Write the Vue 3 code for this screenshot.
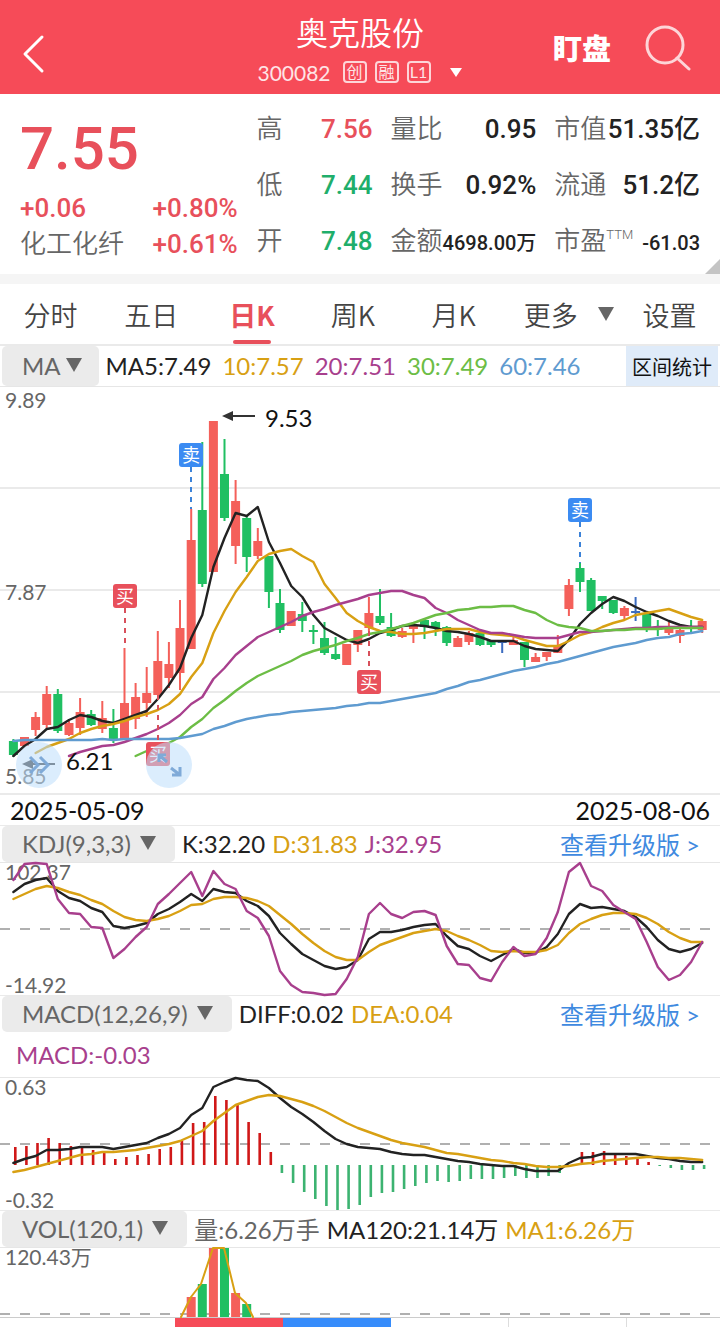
<script setup>
import { ref } from "vue";

const STEP = 11.11;
const xAt = (i) => Math.round((13.4 + i * STEP) * 10) / 10;

const toPoints = (values, start = 0) =>
  values.map((y, i) => `${xAt(i + start)},${y}`).join(" ");

const stats = [
  { label: "高", value: "7.56", tone: "up" },
  { label: "量比", value: "0.95" },
  { label: "市值", value: "51.35亿" },
  { label: "低", value: "7.44", tone: "down" },
  { label: "换手", value: "0.92%" },
  { label: "流通", value: "51.2亿" },
  { label: "开", value: "7.48", tone: "down" },
  { label: "金额", value: "4698.00万", small: true },
  { label: "市盈", sup: "TTM", value: "-61.03", small: true },
];

const tabs = ["分时", "五日", "日K", "周K", "月K"];
const activeTab = ref("日K");

// [colour, body top, body bottom, wick top, wick bottom]
const candles = [
  ["g", 741, 755, 739, 757], ["r", 737, 746, 737, 747], ["r", 717, 730, 712, 736],
  ["r", 694, 725, 686, 728], ["g", 694, 731, 689, 733], ["r", 723, 735, 721, 736],
  ["r", 712, 728, 698, 735], ["g", 714, 725, 710, 726], ["r", 718, 729, 701, 733],
  ["g", 728, 740, 709, 743], ["r", 703, 739, 648, 740], ["r", 697, 719, 683, 729],
  ["r", 693, 703, 667, 717], ["r", 661, 695, 631, 695], ["r", 664, 678, 642, 688],
  ["r", 628, 673, 600, 690], ["r", 540, 649, 509, 649], ["g", 510, 584, 442, 587],
  ["r", 421, 572, 421, 572], ["g", 474, 518, 439, 521], ["r", 501, 546, 480, 564],
  ["g", 518, 557, 515, 572], ["r", 541, 556, 528, 559], ["g", 556, 592, 556, 608],
  ["g", 603, 630, 589, 633], ["r", 611, 626, 611, 626], ["g", 614, 621, 602, 632],
  ["g", 630, 632, 625, 644], ["g", 638, 653, 622, 655], ["g", 654, 659, 637, 660],
  ["r", 644, 665, 644, 665], ["r", 630, 645, 630, 652], ["r", 613, 628, 597, 631],
  ["g", 616, 623, 589, 625], ["g", 627, 636, 613, 637], ["r", 631, 637, 628, 638],
  ["r", 626, 629, 624, 643], ["g", 620, 627, 619, 639], ["g", 622, 628, 621, 636],
  ["g", 627, 643, 626, 646], ["r", 638, 647, 636, 647], ["r", 633, 642, 631, 645],
  ["g", 633, 645, 633, 646], ["g", 641, 645, 641, 647], ["b", 641, 643, 641, 653],
  ["r", 640, 645, 637, 645], ["g", 642, 660, 642, 667], ["r", 657, 662, 653, 662],
  ["r", 652, 657, 652, 661], ["r", 645, 653, 635, 653], ["r", 585, 609, 579, 616],
  ["g", 568, 582, 563, 592], ["g", 580, 611, 578, 611], ["g", 596, 601, 596, 609],
  ["g", 600, 613, 600, 614], ["r", 608, 616, 606, 620], ["b", 611, 613, 597, 621],
  ["g", 614, 630, 613, 632], ["g", 628, 630, 620, 636], ["r", 628, 633, 622, 635],
  ["r", 630, 636, 628, 643], ["g", 627, 629, 620, 632], ["r", 621, 630, 621, 633],
];

const ma5 = [756, 746, 739, 729, 727, 720, 715, 717, 721, 723, 719, 715, 711, 699, 685, 668, 638, 615, 567, 538, 513, 516, 507, 542, 563, 586, 597, 615, 628, 634, 640, 643, 639, 633, 630, 626, 625, 626, 628, 631, 632, 634, 637, 641, 641, 641, 646, 649, 650, 651, 640, 624, 613, 604, 597, 601, 607, 612, 616, 621, 625, 627, 627];
const ma10 = [753, 747, 743, 739, 733, 729, 726, 724, 721, 717, 714, 710, 704, 694, 677, 663, 633, 611, 592, 577, 561, 554, 551, 549, 556, 562, 584, 598, 613, 621, 627, 631, 632, 634, 634, 633, 631, 629, 629, 629, 632, 634, 635, 636, 640, 643, 646, 646, 641, 635, 632, 627, 623, 620, 615, 613, 611, 609, 613, 617, 620];
const ma20 = [756, 752, 749, 746, 745, 742, 738, 734, 729, 723, 715, 704, 697, 679, 668, 655, 646, 637, 632, 627, 622, 616, 612, 609, 605, 602, 599, 595, 593, 591, 591, 595, 598, 608, 613, 620, 625, 630, 633, 633, 635, 637, 638, 638, 638, 635, 632, 632, 631, 630, 629, 628, 628, 627, 627, 627, 627, 627];
const ma30 = [756, 751, 748, 743, 737, 727, 719, 708, 700, 691, 683, 676, 671, 666, 661, 655, 651, 648, 645, 641, 638, 634, 632, 629, 626, 623, 619, 615, 613, 610, 609, 607, 607, 606, 606, 610, 613, 620, 625, 627, 628, 631, 631, 630, 630, 629, 629, 629, 628, 628, 628, 628];
const ma60 = [741, 740, 740, 740, 740, 740, 740, 740, 739, 740, 739, 739, 739, 739, 739, 738, 736, 734, 729, 726, 722, 719, 717, 715, 714, 712, 711, 710, 709, 708, 706, 705, 703, 703, 701, 699, 697, 695, 693, 689, 686, 682, 680, 677, 674, 671, 669, 667, 664, 662, 659, 656, 653, 650, 647, 645, 643, 640, 638, 637, 634, 633, 631];

const averages = [
  { cls: "black", points: toPoints(ma5) },
  { cls: "gold", points: toPoints(ma10, 2) },
  { cls: "purple", points: toPoints(ma20, 5) },
  { cls: "green", points: toPoints(ma30, 11) },
  { cls: "blue", points: toPoints(ma60) },
];

const marks = [
  { text: "卖", kind: "sell", x: 191, y: 443, from: 467, to: 509 },
  { text: "买", kind: "buy", x: 125, y: 584, from: 608, to: 648 },
  { text: "买", kind: "buy", x: 158, y: 742, from: 695, to: 742 },
  { text: "买", kind: "buy", x: 369, y: 670, from: 631, to: 670 },
  { text: "卖", kind: "sell", x: 580, y: 498, from: 522, to: 563 },
];

const kLine = [892, 884, 880, 878, 891, 898, 901, 908, 912, 926, 928, 926, 923, 914, 909, 902, 894, 901, 889, 892, 893, 901, 906, 916, 933, 944, 954, 960, 966, 969, 967, 960, 939, 932, 932, 930, 927, 925, 924, 936, 946, 949, 956, 961, 955, 949, 953, 953, 947, 934, 914, 904, 908, 907, 909, 911, 917, 927, 940, 949, 952, 949, 943];
const dLine = [899, 894, 889, 886, 888, 892, 895, 900, 904, 911, 917, 920, 921, 919, 916, 911, 905, 904, 899, 897, 897, 898, 901, 906, 915, 924, 934, 943, 951, 957, 960, 960, 952, 945, 941, 937, 933, 931, 929, 931, 936, 940, 945, 951, 952, 951, 952, 952, 950, 945, 933, 924, 919, 915, 913, 913, 914, 918, 924, 932, 938, 942, 942];
const jLine = [880, 864, 863, 864, 899, 913, 914, 927, 928, 958, 949, 937, 927, 904, 894, 883, 872, 896, 871, 884, 889, 911, 918, 936, 971, 985, 992, 993, 995, 994, 979, 957, 914, 903, 914, 918, 912, 911, 915, 946, 964, 965, 978, 981, 962, 947, 956, 954, 938, 912, 872, 863, 886, 891, 905, 912, 919, 942, 967, 980, 975, 962, 942];

const macdZero = 1165;
const macdBars = [1147, 1146, 1143, 1138, 1143, 1146, 1147, 1150, 1153, 1159, 1157, 1155, 1154, 1149, 1147, 1141, 1123, 1122, 1096, 1100, 1105, 1122, 1133, 1152, 1173, 1183, 1192, 1199, 1206, 1210, 1209, 1205, 1197, 1193, 1192, 1189, 1186, 1183, 1181, 1182, 1181, 1179, 1179, 1179, 1178, 1176, 1178, 1178, 1176, 1173, 1165, 1152, 1152, 1151, 1154, 1156, 1158, 1162, 1166, 1168, 1170, 1170, 1169];
const diffLine = [1163, 1159, 1156, 1150, 1150, 1149, 1147, 1147, 1147, 1149, 1147, 1145, 1143, 1138, 1134, 1128, 1115, 1108, 1087, 1082, 1078, 1080, 1081, 1088, 1098, 1107, 1114, 1122, 1131, 1139, 1144, 1147, 1148, 1149, 1152, 1154, 1155, 1155, 1157, 1159, 1161, 1162, 1164, 1165, 1166, 1166, 1169, 1171, 1171, 1171, 1163, 1158, 1157, 1154, 1154, 1154, 1154, 1156, 1158, 1159, 1161, 1162, 1162];
const deaLine = [1172, 1170, 1167, 1164, 1161, 1158, 1155, 1154, 1152, 1152, 1151, 1150, 1148, 1146, 1144, 1141, 1136, 1131, 1121, 1113, 1105, 1101, 1097, 1095, 1096, 1099, 1102, 1106, 1111, 1117, 1123, 1128, 1132, 1136, 1140, 1143, 1145, 1147, 1150, 1153, 1154, 1156, 1158, 1160, 1161, 1163, 1164, 1166, 1167, 1167, 1166, 1164, 1163, 1161, 1160, 1159, 1158, 1157, 1157, 1158, 1158, 1159, 1160];

const volumes = [
  { i: 16, top: 1297, cls: "r" },
  { i: 17, top: 1284, cls: "g" },
  { i: 18, top: 1248, cls: "r" },
  { i: 19, top: 1248, cls: "g" },
  { i: 20, top: 1293, cls: "r" },
  { i: 21, top: 1304, cls: "g" },
];
</script>

<template>
  <div class="page">
    <header class="top-bar">
      <button type="button" class="icon-btn back" aria-label="返回">
        <svg width="24" height="40" viewBox="0 0 24 40">
          <path d="M20 3 L3 20 L20 37" />
        </svg>
      </button>
      <div class="title-box">
        <h1>奥克股份</h1>
        <div class="sub-title">
          <span class="code">300082</span>
          <span class="tag">创</span>
          <span class="tag">融</span>
          <span class="tag">L1</span>
          <svg class="drop" width="14" height="9" viewBox="0 0 14 9">
            <path d="M1 0 H13 L7 9 Z" />
          </svg>
        </div>
      </div>
      <div class="actions">
        <button type="button" class="watch">盯盘</button>
        <button type="button" class="icon-btn" aria-label="搜索">
          <svg class="search" width="48" height="48" viewBox="0 0 48 48">
            <circle cx="21" cy="22" r="18" />
            <path d="M33 35 L45 46" />
          </svg>
        </button>
      </div>
    </header>

    <section class="quote">
      <div class="price-box">
        <div class="price">7.55</div>
        <div class="change"><span>+0.06</span><span>+0.80%</span></div>
        <div class="change"><span class="sector">化工化纤</span><span>+0.61%</span></div>
      </div>
      <dl class="stats">
        <div v-for="item in stats" :key="item.label" class="stat">
          <dt>{{ item.label }}<sup v-if="item.sup">{{ item.sup }}</sup></dt>
          <dd :class="[item.tone, { small: item.small }]">{{ item.value }}</dd>
        </div>
      </dl>
      <span class="corner"></span>
    </section>

    <nav class="tabs">
      <button v-for="tab in tabs" :key="tab" type="button" class="tab" :class="{ active: tab === activeTab }"
        @click="activeTab = tab">{{ tab }}</button>
      <button type="button" class="tab more">更多
        <svg width="16" height="16" viewBox="0 0 16 16"><path d="M0 1 H16 L8 15 Z" /></svg>
      </button>
      <button type="button" class="tab setup">设置</button>
    </nav>

    <div class="legend ma-legend">
      <button type="button" class="chip">MA
        <svg width="16" height="16" viewBox="0 0 16 16"><path d="M0 1 H16 L8 15 Z" /></svg>
      </button>
      <span class="black">MA5:7.49</span>
      <span class="gold">10:7.57</span>
      <span class="purple">20:7.51</span>
      <span class="green">30:7.49</span>
      <span class="blue">60:7.46</span>
      <button type="button" class="range">区间统计</button>
    </div>

    <section class="main-chart">
      <svg class="chart" viewBox="0 386 720 410">
        <path class="grid" d="M0 488 H720 M0 590 H720 M0 692 H720 M0 794 H720" />
        <path class="edge" d="M0 386.5 H720" />
        <text class="axis" x="5" y="408">9.89</text>
        <text class="axis" x="5" y="600">7.87</text>
        <text class="axis" x="5" y="784">5.85</text>
        <g v-for="(c, i) in candles" :key="i" :class="c[0]">
          <rect :x="xAt(i) - 1" :y="c[3]" width="2" :height="c[4] - c[3]" />
          <rect :x="xAt(i) - 4.5" :y="c[1]" width="9" :height="c[2] - c[1]" />
        </g>
        <polyline v-for="line in averages" :key="line.cls" class="line" :class="line.cls" :points="line.points" />
        <g v-for="(m, i) in marks" :key="'m' + i" :class="m.kind">
          <line :x1="m.x" :x2="m.x" :y1="m.from" :y2="m.to" />
          <rect :x="m.x - 12" :y="m.y" width="24" height="24" rx="3" />
          <text :x="m.x" :y="m.y + 19">{{ m.text }}</text>
        </g>
        <g class="arrow">
          <path d="M232 416 H255 M32 764 H55" />
          <path class="head" d="M222 416 L233 411 V421 Z M22 764 L33 759 V769 Z" />
          <text x="265" y="427">9.53</text>
          <text x="66" y="770">6.21</text>
        </g>
      </svg>
      <button type="button" class="float-btn left" aria-label="展开">
        <svg width="28" height="24" viewBox="0 0 28 24"><path d="M5 4 L13 12 L5 20 M15 4 L23 12 L15 20" /></svg>
      </button>
      <button type="button" class="float-btn right" aria-label="全屏">
        <svg width="28" height="28" viewBox="0 0 28 28">
          <path d="M12 11 L4 4 M4 11 V4 H11 M16 17 L25 24 M25 16 V24 H17" />
        </svg>
      </button>
    </section>
    <div class="dates"><span>2025-05-09</span><span>2025-08-06</span></div>

    <div class="legend">
      <button type="button" class="chip">KDJ(9,3,3)
        <svg width="16" height="16" viewBox="0 0 16 16"><path d="M0 1 H16 L8 15 Z" /></svg>
      </button>
      <span class="black">K:32.20</span>
      <span class="gold">D:31.83</span>
      <span class="purple">J:32.95</span>
      <a href="#" class="upgrade">查看升级版 &gt;</a>
    </div>
    <svg class="chart" viewBox="0 862 720 133">
      <path class="edge" d="M0 862.5 H720" />
      <path class="dash" d="M0 929 H710" />
      <text class="axis" x="5" y="880">102.37</text>
      <text class="axis" x="5" y="993">-14.92</text>
      <polyline class="line black" :points="toPoints(kLine)" />
      <polyline class="line gold" :points="toPoints(dLine)" />
      <polyline class="line purple" :points="toPoints(jLine)" />
    </svg>

    <div class="legend">
      <button type="button" class="chip">MACD(12,26,9)
        <svg width="16" height="16" viewBox="0 0 16 16"><path d="M0 1 H16 L8 15 Z" /></svg>
      </button>
      <span class="black">DIFF:0.02</span>
      <span class="gold">DEA:0.04</span>
      <a href="#" class="upgrade">查看升级版 &gt;</a>
    </div>
    <div class="legend-extra purple">MACD:-0.03</div>
    <svg class="chart" viewBox="0 1077 720 133">
      <path class="edge" d="M0 1077.5 H720" />
      <path class="dash" d="M0 1144 H710" />
      <text class="axis" x="5" y="1095">0.63</text>
      <text class="axis" x="5" y="1208">-0.32</text>
      <rect v-for="(y, i) in macdBars" :key="i" :class="y < macdZero ? 'bar-up' : 'bar-down'" :x="xAt(i) + 0.6"
        :y="Math.min(y, macdZero)" width="2.6" :height="Math.abs(y - macdZero)" />
      <polyline class="line black" :points="toPoints(diffLine)" />
      <polyline class="line gold" :points="toPoints(deaLine)" />
    </svg>

    <div class="legend">
      <button type="button" class="chip">VOL(120,1)
        <svg width="16" height="16" viewBox="0 0 16 16"><path d="M0 1 H16 L8 15 Z" /></svg>
      </button>
      <span class="gray">量:6.26万手</span>
      <span class="black">MA120:21.14万</span>
      <span class="gold">MA1:6.26万</span>
    </div>
    <svg class="chart" viewBox="0 1247 720 70">
      <path class="edge" d="M0 1247.5 H720" />
      <path class="dash" d="M0 1314 H710" />
      <text class="axis" x="5" y="1265">120.43万</text>
      <rect v-for="v in volumes" :key="v.i" :class="v.cls" :x="xAt(v.i) - 4.5" :y="v.top" width="9"
        :height="1317 - v.top" />
      <polyline class="line thin gold" points="181,1317 191,1297 201,1284 213,1248 224,1248 235,1293 246,1303 253,1317" />
    </svg>

    <footer class="bottom-bar">
      <span></span>
      <span class="buy-tab"></span>
      <span class="sell-tab"></span>
      <span class="cell"></span>
      <span class="cell"></span>
      <span></span>
    </footer>
  </div>
</template>

<style>
body {
  background: #fff;
}
</style>

<style scoped>
.page {
  font-family: Lato, "Noto Sans CJK SC", sans-serif;
  color: #222;
  background: #fff;
  overflow: hidden;
}

button {
  font: inherit;
  color: inherit;
  background: none;
  border: none;
  padding: 0;
  margin: 0;
  cursor: pointer;
}

.top-bar {
  display: grid;
  grid-template-columns: 1fr auto 1fr;
  align-items: center;
  height: 94px;
  padding: 0 28px;
  background: #f64b58;
  color: #fff;
}

.icon-btn {
  display: flex;
}

.icon-btn path,
.icon-btn circle {
  fill: none;
  stroke: #fff;
  stroke-width: 3;
  stroke-linecap: round;
  stroke-linejoin: round;
}

.back {
  margin: 14px 0 0 -6px;
}

.icon-btn .search path,
.icon-btn .search circle {
  stroke: #fdd5d8;
}

.title-box {
  padding-top: 10px;
}

h1 {
  margin: 0;
  font-size: 32px;
  font-weight: 350;
  line-height: 40px;
  text-align: center;
}

.sub-title {
  display: flex;
  align-items: center;
  gap: 8px;
  height: 38px;
  color: #fee4e6;
}

.code {
  margin-right: 4px;
  font-size: 21px;
}

.tag {
  min-width: 20px;
  border: 2px solid #fdd5d8;
  border-radius: 4px;
  font-size: 16px;
  line-height: 18px;
  text-align: center;
}

.drop {
  margin-left: 10px;
  fill: #fff;
}

.actions {
  display: flex;
  justify-content: flex-end;
  align-items: center;
  gap: 33px;
}

.watch {
  font-size: 29px;
  font-weight: 900;
}

.quote {
  position: relative;
  display: flex;
  height: 180px;
  border-bottom: 10px solid #f5f5f5;
}

.price-box {
  flex: none;
  display: flex;
  flex-direction: column;
  width: 33%;
  padding: 14px 0 0 20px;
  box-sizing: border-box;
  color: #e8505b;
}

.price {
  font-family: Roboto, sans-serif;
  font-size: 60px;
  font-weight: 500;
  line-height: 82px;
}

.change {
  display: flex;
  justify-content: space-between;
  font-family: Roboto, "Noto Sans CJK SC", sans-serif;
  font-size: 26px;
  font-weight: 500;
  line-height: 36px;
}

.sector {
  color: #666;
  font-weight: 350;
}

.stats {
  flex: 1;
  display: grid;
  grid-template-columns: 116px minmax(0, 1fr) minmax(0, 1fr);
  grid-auto-rows: 56px;
  column-gap: 18px;
  margin: 0;
  padding: 7px 20px 0 19px;
  font-family: Roboto, "Noto Sans CJK SC", sans-serif;
  line-height: 56px;
}

.stat {
  display: flex;
  justify-content: space-between;
  align-items: baseline;
  white-space: nowrap;
}

dt {
  position: relative;
  color: #666;
  font-size: 26px;
  font-weight: 350;
}

sup {
  position: absolute;
  left: 100%;
  top: 14px;
  font-size: 13px;
  line-height: 16px;
}

dd {
  margin: 0;
  font-size: 26px;
  font-weight: 500;
}

dd.small {
  font-size: 20px;
}

.up {
  color: #e8505b;
}

.down {
  color: #1fae6b;
}

.corner {
  position: absolute;
  right: 0;
  bottom: 0;
  border-left: 15px solid transparent;
  border-bottom: 15px solid #c4c4c4;
}

.tabs {
  display: flex;
  height: 60px;
  border-bottom: 2px solid #eaeaea;
  font-family: "Noto Sans CJK SC", sans-serif;
  font-size: 27px;
  font-weight: 350;
  color: #444;
}

.tab {
  position: relative;
  width: 14%;
}

.tab.active {
  color: #e8505b;
  font-weight: 700;
}

.tab.active::after {
  content: "";
  position: absolute;
  left: 50%;
  bottom: 0;
  width: 38px;
  height: 4px;
  margin-left: -19px;
  border-radius: 2px;
  background: #e8505b;
}

.tab.more {
  display: flex;
  align-items: center;
  justify-content: center;
  gap: 20px;
  width: 18%;
}

.tab.more svg,
.chip svg {
  fill: #666;
}

.tab.setup {
  width: 10%;
}

.legend {
  display: flex;
  align-items: center;
  gap: 7px;
  height: 36px;
  padding-left: 2px;
  border-top: 1px solid #eaeaea;
  font-size: 24px;
  white-space: nowrap;
}

.legend span,
.legend a {
  padding-bottom: 2px;
}

.ma-legend {
  height: 40px;
  gap: 11px;
  padding-right: 2px;
  border-top: none;
}

.chip {
  display: flex;
  align-items: center;
  gap: 9px;
  height: 100%;
  padding: 0 19px 2px 20px;
  border-radius: 5px;
  background: #ebebeb;
  color: #666;
}

.ma-legend .chip {
  gap: 5px;
  margin-right: -4px;
  padding-right: 17px;
}

.range {
  margin-left: auto;
  height: 100%;
  padding: 0 6px;
  background: #dfebf9;
  color: #111;
  font-size: 20px;
}

.upgrade {
  margin-left: auto;
  margin-right: 20px;
  color: #3f8ae0;
  text-decoration: none;
}

.legend-extra {
  height: 45px;
  padding-left: 16px;
  font-size: 24px;
  line-height: 46px;
}

.black {
  color: #222;
  stroke: #222;
}

.gold {
  color: #d8a013;
  stroke: #d8a013;
}

.purple {
  color: #a83f8d;
  stroke: #a83f8d;
}

.green {
  color: #6cbd45;
  stroke: #6cbd45;
}

.blue {
  color: #5f9bd0;
  stroke: #5f9bd0;
}

.gray {
  color: #666;
}

.main-chart {
  position: relative;
}

.chart {
  display: block;
  width: 100%;
  height: auto;
  overflow: visible;
}

.grid {
  stroke: #eaeaea;
  stroke-width: 2;
}

.edge {
  stroke: #e6e6e6;
}

.dash {
  stroke: #b0b0b0;
  stroke-width: 2;
  stroke-dasharray: 10 10;
}

.axis {
  fill: #666;
  font-size: 21px;
}

.line {
  fill: none;
  stroke-width: 2.4;
  stroke-linejoin: round;
  stroke-linecap: round;
}

.thin {
  stroke-width: 2;
}

.r {
  fill: #f4605a;
}

.g {
  fill: #20bf62;
}

.b {
  fill: #3c6cc0;
}

.bar-up {
  fill: #d01818;
}

.bar-down {
  fill: #3cb371;
}

.buy rect {
  fill: #e8505b;
}

.buy line {
  stroke: #d8505b;
}

.sell rect {
  fill: #3b8bf2;
}

.sell line {
  stroke: #3b82d8;
}

.buy line,
.sell line {
  stroke-width: 2;
  stroke-dasharray: 5 5;
}

.buy text,
.sell text {
  fill: #fff;
  font-size: 18px;
  text-anchor: middle;
}

.arrow path {
  stroke: #333;
  stroke-width: 2;
}

.arrow .head {
  fill: #333;
  stroke: none;
}

.arrow text {
  fill: #111;
  font-size: 24px;
}

.float-btn {
  position: absolute;
  bottom: 8px;
  display: flex;
  align-items: center;
  justify-content: center;
  width: 46px;
  height: 46px;
  border-radius: 50%;
  background: rgba(190, 222, 252, 0.55);
}

.float-btn path {
  fill: none;
  stroke: #7faad8;
  stroke-width: 3;
}

.float-btn.left {
  left: 16px;
}

.float-btn.right {
  left: 146px;
}

.dates {
  display: flex;
  justify-content: space-between;
  padding: 0 10px;
  font-size: 25px;
  line-height: 29px;
  color: #111;
}

.bottom-bar {
  display: grid;
  grid-template-columns: 175fr 108fr 108fr 118fr 118fr 93fr;
  height: 9px;
  border-top: 1px solid #ccc;
}

.buy-tab {
  background: #f64b58;
}

.sell-tab {
  background: #368cfb;
}

.cell {
  border-right: 1px solid #ddd;
}
</style>
